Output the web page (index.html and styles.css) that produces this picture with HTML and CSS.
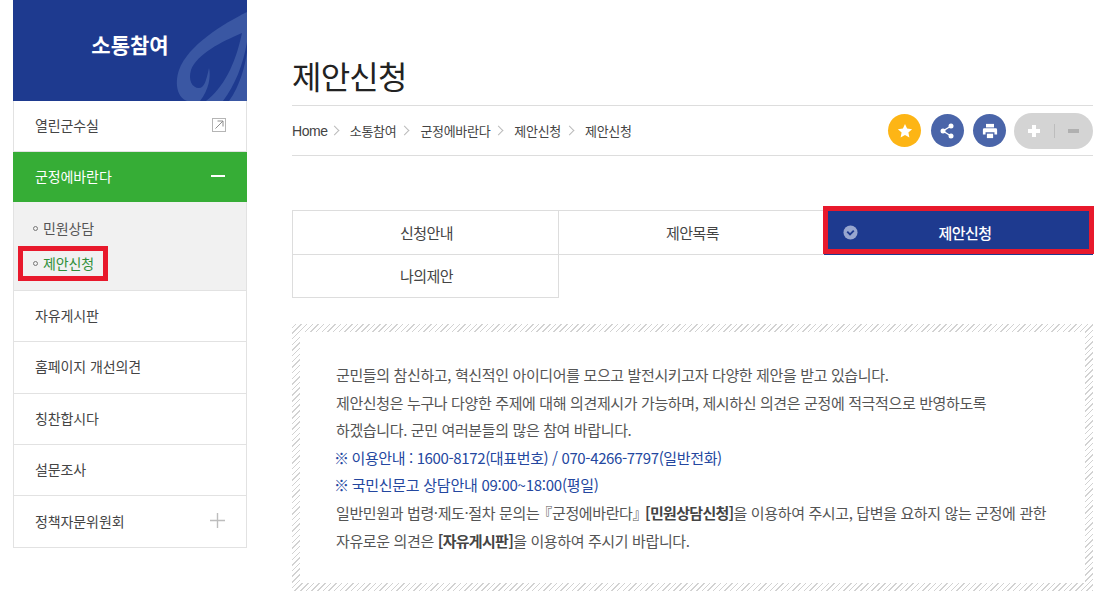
FILE: index.html
```html
<!DOCTYPE html>
<html lang="ko">
<head>
<meta charset="UTF-8">
<meta name="viewport" content="width=device-width, initial-scale=1.0">
<title>제안신청</title>
<link rel="stylesheet" href="styles.css">
</head>
<body>

<div class="wrap">

<aside class="side">
    <div class="side-head">
        <svg class="side-mark" viewBox="0 0 74 101" aria-hidden="true">
            <path d="M74 12C50 24 15 45 6 70C1 85 5 98 14 101H74Z" fill="#3a57a3"/>
            <path d="M69 33C48 42 24 54 18 70C15 80 19 88 26 88C31 88 33 82 36 68C38 76 36 90 27 101H33C50 88 62 66 69 33Z" fill="#1e3a8f"/>
            <path d="M74 42C70 65 62 85 50 101H56C67 86 72 66 74 52Z" fill="#1e3a8f"/>
        </svg>
        <h2>소통참여</h2>
    </div>
    <ul class="side-menu">
        <li class="side-item">
            <a href="#">열린군수실</a>
            <svg class="ico-out" viewBox="0 0 14 14" aria-hidden="true">
                <rect x="0.5" y="0.5" width="13" height="13" fill="none" stroke="#b5b5b5"/>
                <path d="M3.5 10.5L11 3M5.5 3H11V8.5" fill="none" stroke="#8e8e8e"/>
            </svg>
        </li>
        <li class="side-item on">
            <a href="#">군정에바란다</a>
            <span class="ico-minus"></span>
        </li>
        <li class="side-sub">
            <a href="#">민원상담</a>
            <a href="#" class="cur">제안신청</a>
        </li>
        <li class="side-item"><a href="#">자유게시판</a></li>
        <li class="side-item"><a href="#">홈페이지 개선의견</a></li>
        <li class="side-item"><a href="#">칭찬합시다</a></li>
        <li class="side-item"><a href="#">설문조사</a></li>
        <li class="side-item">
            <a href="#">정책자문위원회</a>
            <svg class="ico-plus" viewBox="0 0 15 15" aria-hidden="true">
                <path d="M0 7.5H15M7.5 0V15" stroke="#bdbdbd" stroke-width="1.4"/>
            </svg>
        </li>
    </ul>
</aside>

<main class="content">
    <h1 class="page-title">제안신청</h1>

    <div class="loc-bar">
        <div class="loc">
            <span class="home">Home</span><i></i>
            <span>소통참여</span><i></i>
            <span>군정에바란다</span><i></i>
            <span>제안신청</span><i></i>
            <span>제안신청</span>
        </div>
        <div class="tools">
            <button class="tool star" type="button" aria-label="즐겨찾기">
                <svg viewBox="0 0 16 16"><path d="M8 1l2.1 4.6 5 .6-3.7 3.4 1 5L8 11.900l-4.400 2.700 1-5L.9 6.200l5-.6z" fill="#fff"/></svg>
            </button>
            <button class="tool blue" type="button" aria-label="공유">
                <svg viewBox="0 0 16 16">
                    <path d="M12 3L4 8l8 5" fill="none" stroke="#fff" stroke-width="1.4"/>
                    <circle cx="12" cy="3" r="2.5" fill="#fff"/>
                    <circle cx="4" cy="8" r="2.5" fill="#fff"/>
                    <circle cx="12" cy="13" r="2.5" fill="#fff"/>
                </svg>
            </button>
            <button class="tool blue" type="button" aria-label="인쇄">
                <svg viewBox="0 0 18 18">
                    <path d="M4.5 1h9v4h-9z" fill="#fff"/>
                    <path d="M2.5 6h13A1.5 1.5 0 0 1 17 7.5V13h-3v-2.500H4V13H1V7.500A1.500 1.500 0 0 1 2.500 6z" fill="#fff"/>
                    <path d="M5.500 12h7v5h-7z" fill="#fff"/>
                </svg>
            </button>
            <div class="zoom">
                <span class="zoom-in"></span>
                <span class="zoom-sep"></span>
                <span class="zoom-out"></span>
            </div>
        </div>
    </div>

    <ul class="tabs">
        <li><a href="#">신청안내</a></li>
        <li><a href="#">제안목록</a></li>
        <li class="on">
            <svg class="tab-check" viewBox="0 0 16 16" aria-hidden="true">
                <circle cx="8" cy="8" r="7.500" fill="#98a6cf"/>
                <path d="M4.500 7L7.500 10l4-4" fill="none" stroke="#1e3a8f" stroke-width="2"/>
            </svg>
            <a href="#">제안신청</a>
        </li>
        <li><a href="#">나의제안</a></li>
    </ul>

    <div class="notice">
        <p>군민들의 참신하고, 혁신적인 아이디어를 모으고 발전시키고자 다양한 제안을 받고 있습니다.</p>
        <p>제안신청은 누구나 다양한 주제에 대해 의견제시가 가능하며, 제시하신 의견은 군정에 적극적으로 반영하도록</p>
        <p>하겠습니다. 군민 여러분들의 많은 참여 바랍니다.</p>
        <p class="blue-txt"><span class="mark">※</span> 이용안내 : 1600-8172(대표번호) / 070-4266-7797(일반전화)</p>
        <p class="blue-txt wide"><span class="mark">※</span> 국민신문고 상담안내 09:00~18:00(평일)</p>
        <p>일반민원과 법령·제도·절차 문의는<span class="qt-l">『</span>군정에바란다<span class="qt-r">』</span> <b>[민원상담신청]</b>을 이용하여 주시고, 답변을 요하지 않는 군정에 관한</p>
        <p>자유로운 의견은 <b>[자유게시판]</b>을 이용하여 주시기 바랍니다.</p>
    </div>
</main>

</div>

</body>
</html>
```

FILE: styles.css
```css
* {
    box-sizing: border-box;
}
html, body {
    margin: 0;
    padding: 0;
    background-color: #fff;
}
body {
    font-family: "Noto Sans CJK KR", "Noto Sans", sans-serif;
    color: #333;
    overflow: hidden;
}
a {
    color: inherit;
    text-decoration: none;
}
ul {
    list-style: none;
    margin: 0;
    padding: 0;
}
.wrap {
    display: flex;
    align-items: flex-start;
    gap: 45px;
    width: 1080px;
    height: 607px;
    margin-left: 13px;
}

/* left menu */
.side {
    width: 234px;
    flex: none;
}
.side-head {
    position: relative;
    height: 101px;
    background-color: #1e3a8f;
    overflow: hidden;
    display: flex;
    justify-content: center;
    align-items: center;
}
.side-head h2 {
    position: relative;
    margin: 0 0 13px;
    font-size: 21px;
    font-weight: 700;
    letter-spacing: 0;
    color: #fff;
}
.side-mark {
    position: absolute;
    right: 0;
    top: 0;
    width: 74px;
    height: 101px;
}
.side-menu {
    border: 1px solid #e2e2e2;
    border-top: 0;
}
.side-item {
    display: flex;
    justify-content: space-between;
    align-items: center;
    height: 51.3px;
    padding: 0 21px 2px 21px;
    font-size: 14px;
    letter-spacing: -0.1px;
    color: #444;
    border-bottom: 1px solid #e2e2e2;
}
.side-item:last-child {
    border-bottom: 0;
}
.side-item.on {
    height: 50px;
    margin: 0 -1px;
    padding: 0 22px 2px 22px;
    background-color: #36ad36;
    color: #fff;
    border-bottom: 0;
}
.ico-out {
    width: 14px;
    height: 14px;
    margin-right: -1px;
}
.ico-minus {
    width: 14px;
    height: 2px;
    background-color: #fff;
}
.ico-plus {
    width: 15px;
    height: 15px;
}
.side-sub {
    display: flex;
    flex-direction: column;
    align-items: flex-start;
    gap: 14px;
    height: 88.7px;
    padding: 16px 0 0 19px;
    background-color: #f1f1f1;
    border-bottom: 1px solid #e2e2e2;
    font-size: 14px;
    line-height: 21px;
    letter-spacing: -0.1px;
    color: #555;
}
.side-sub a {
    display: flex;
    align-items: center;
    gap: 5px;
    height: 21px;
    margin-left: -8px;
    padding: 0 7px 0 8px;
}
.side-sub a::before {
    content: "";
    width: 3px;
    height: 3px;
    border: 1px solid #777;
    border-radius: 50%;
}
.side-sub .cur {
    color: #2f8f3a;
    outline: 5px solid #e8192c;
    outline-offset: 2px;
}

/* title and location */
.content {
    flex: 1;
    min-width: 0;
}
.page-title {
    margin: 0;
    height: 105px;
    padding-top: 51px;
    font-size: 32px;
    line-height: 48px;
    font-weight: 400;
    letter-spacing: -0.8px;
    color: #222;
}
.loc-bar {
    display: flex;
    justify-content: space-between;
    align-items: center;
    height: 51px;
    border-top: 1px solid #ddd;
    border-bottom: 1px solid #ddd;
}
.loc {
    display: flex;
    align-items: center;
    font-size: 13px;
    letter-spacing: -0.3px;
    color: #444;
}
.loc .home {
    margin-right: -2px;
    font-family: "Liberation Sans", sans-serif;
    font-size: 14px;
    letter-spacing: -0.4px;
}
.loc i {
    width: 7px;
    height: 7px;
    margin: 0 12px 0 5px;
    border-top: 1px solid #bbb;
    border-right: 1px solid #bbb;
    transform: rotate(45deg);
}
.tools {
    display: flex;
    align-items: center;
    gap: 9.5px;
}
.tool {
    width: 33px;
    height: 33px;
    padding: 0;
    border: 0;
    border-radius: 50%;
    display: flex;
    justify-content: center;
    align-items: center;
}
.tool svg {
    width: 16px;
    height: 16px;
}
.tool.star {
    background-color: #fdb515;
}
.tool.blue {
    background-color: #4a65a9;
}
.zoom {
    display: flex;
    align-items: center;
    justify-content: center;
    width: 79px;
    height: 36px;
    margin-left: -1.5px;
    border-radius: 18px;
    background-color: #d4d4d4;
}
.zoom-in {
    width: 12px;
    height: 12px;
    background:
        linear-gradient(#fff, #fff) center / 12px 4px no-repeat,
        linear-gradient(#fff, #fff) center / 4px 12px no-repeat;
}
.zoom-sep {
    width: 1px;
    height: 14px;
    margin: 0 13px 0 14px;
    background-color: #bdbdbd;
}
.zoom-out {
    width: 11px;
    height: 4px;
    background-color: #b0b0b0;
}

/* tabs */
.tabs {
    display: grid;
    grid-template-columns: 266px 266px 269px;
    grid-auto-rows: 44px;
    margin-top: 54px;
}
.tabs li {
    position: relative;
    display: flex;
    justify-content: center;
    align-items: center;
    margin: 0 -1px -1px 0;
    padding-left: 2px;
    border: 1px solid #ddd;
    font-size: 15px;
    letter-spacing: -0.5px;
    color: #444;
}
.tabs li:last-child {
    height: 44px;
    padding-bottom: 2px;
}
.tabs .on {
    margin-right: 0;
    padding-left: 13px;
    background-color: #1e3a8f;
    color: #fff;
    border-color: #1e3a8f;
    font-weight: 500;
    z-index: 1;
}
/* red mark lying over the active tab */
.tabs .on::after {
    content: "";
    position: absolute;
    top: -5px;
    left: -2px;
    right: -2px;
    bottom: 0;
    border: 5px solid #e8192c;
}
.tab-check {
    position: absolute;
    left: 18px;
    top: 14px;
    width: 15px;
    height: 15px;
}

/* notice box */
.notice {
    height: 267px;
    margin-top: 26px;
    padding: 29px 36px 0;
    border: 8px solid transparent;
    background:
        linear-gradient(#fff, #fff) padding-box,
        repeating-linear-gradient(-45deg, #d2d2d2 0 1px, #fff 1px 4px) border-box;
    font-size: 15px;
    line-height: 27.6px;
    letter-spacing: -0.37px;
    color: #555;
}
.notice p {
    margin: 0;
    white-space: nowrap;
}
.notice b {
    color: #444;
    letter-spacing: -0.7px;
}
.qt-l {
    margin-left: -2px;
}
.qt-r {
    margin-right: -6px;
}
.blue-txt {
    color: #24479f;
}
.blue-txt.wide {
    letter-spacing: -0.26px;
}
.mark {
    margin: 0 -1px 0 -2px;
}
```
